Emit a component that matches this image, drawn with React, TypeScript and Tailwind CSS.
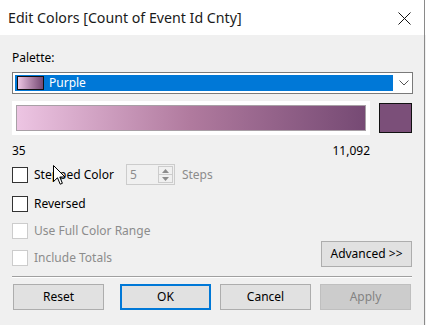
const FONT = { fontFamily: '"Segoe UI", "Noto Sans", "Open Sans", sans-serif' };

function CheckBox({ disabled }: { disabled?: boolean }) {
  return (
    <div
      className={`h-[16px] w-[16px] shrink-0 border bg-white ${disabled ? "border-[#cccccc]" : "border-[#333333]"}`}
    />
  );
}

function Button({ label, primary, disabled }: { label: string; primary?: boolean; disabled?: boolean }) {
  return (
    <div
      className={`flex h-[26px] w-[91px] items-center justify-center text-[12px] ${
        primary
          ? "border-2 border-[#0078d7] bg-[#e1e1e1] text-black"
          : disabled
          ? "border border-[#bfbfbf] bg-[#cccccc] text-[#838383]"
          : "border border-[#adadad] bg-[#e1e1e1] text-black"
      }`}
    >
      {label}
    </div>
  );
}

export default function App() {
  return (
    <div className="relative h-[325px] w-[426px] overflow-hidden bg-[#f0f0f0] text-black" style={FONT}>
      {/* title bar */}
      <div className="flex h-[35px] items-center justify-between bg-white pl-[8px] pr-[15px]">
        <span className="text-[14.2px] text-[#1a1a1a]">Edit Colors [Count of Event Id Cnty]</span>
        <svg width="13" height="13" viewBox="0 0 13 13" className="mt-[1px]">
          <path d="M0.5 0.5 L12.5 12.5 M12.5 0.5 L0.5 12.5" stroke="#111" strokeWidth="1" />
        </svg>
      </div>

      <div className="px-[12px]">
        <div className="mt-[14px] h-[17px] text-[12px] leading-[17px]">Palette:</div>

        {/* dropdown */}
        <div className="mt-[6px] flex h-[22px] w-[401px] items-center border border-[#7a7a7a] bg-white pl-[2px]">
          <div className="flex h-[16px] w-[378px] items-center bg-[#0078d7] pl-[2px]">
            <div className="h-[14px] w-[27px] border border-[#111] bg-gradient-to-r from-[#edc5e3] to-[#764a74]" />
            <span className="ml-[5px] text-[12px] text-white">Purple</span>
          </div>
          <svg width="10" height="6" viewBox="0 0 10 6" className="ml-[6px]">
            <path d="M0.5 0.5 L5 5 L9.5 0.5" fill="none" stroke="#555" strokeWidth="1" />
          </svg>
        </div>

        {/* gradient */}
        <div className="mt-[7px] flex items-start">
          <div className="h-[34px] w-[358px] bg-white p-[4px]">
            <div className="h-full w-full border border-[#a8a0a6] bg-gradient-to-r from-[#edc5e3] via-[#b07a9e] to-[#764a74]" />
          </div>
          <div className="ml-[9px] mt-[2px] h-[30px] w-[33px] border border-[#111] bg-[#7b4f79]" />
        </div>

        <div className="mt-[8px] flex w-[358px] justify-between text-[12px] leading-[16px]">
          <span>35</span>
          <span>11,092</span>
        </div>

        {/* stepped color */}
        <div className="mt-[5px] flex h-[21px] items-center">
          <CheckBox />
          <span className="ml-[6px] text-[12px]">Stepped Color</span>
          <div className="ml-[12px] flex h-[21px] w-[49px] items-center border border-[#cccccc] bg-[#f0f0f0]">
            <span className="ml-[3px] flex-1 text-[12px] text-[#8c8c8c]">5</span>
            <div className="mr-[1px] flex h-[17px] w-[15px] flex-col border border-[#cccccc]">
              <div className="flex flex-1 items-center justify-center border-b border-[#cccccc]">
                <svg width="7" height="4" viewBox="0 0 7 4"><path d="M0 4 L3.5 0 L7 4 Z" fill="#8c8c8c" /></svg>
              </div>
              <div className="flex flex-1 items-center justify-center">
                <svg width="7" height="4" viewBox="0 0 7 4"><path d="M0 0 L3.5 4 L7 0 Z" fill="#8c8c8c" /></svg>
              </div>
            </div>
          </div>
          <span className="ml-[7px] text-[12px] text-[#8c8c8c]">Steps</span>
        </div>

        <div className="mt-[11px] flex h-[16px] items-center">
          <CheckBox />
          <span className="ml-[6px] text-[12px]">Reversed</span>
        </div>

        <div className="mt-[11px] flex items-start justify-between">
          <div className="flex flex-col">
            <div className="flex h-[16px] items-center">
              <CheckBox disabled />
              <span className="ml-[6px] text-[12px] text-[#8c8c8c]">Use Full Color Range</span>
            </div>
            <div className="mt-[11px] flex h-[16px] items-center">
              <CheckBox disabled />
              <span className="ml-[6px] text-[12px] text-[#8c8c8c]">Include Totals</span>
            </div>
          </div>
          <div className="mr-[2px] mt-[18px] flex h-[26px] w-[91px] items-center justify-center border border-[#adadad] bg-[#e1e1e1] text-[12px]">
            Advanced &gt;&gt;
          </div>
        </div>

        <div className="mt-[9px] h-[2px] w-[400px] border-t border-[#a0a0a0] border-b border-b-white" />

        <div className="mt-[6px] flex w-[400px] pl-[1px]">
          <Button label="Reset" />
          <div className="ml-[16px]">
            <Button label="OK" primary />
          </div>
          <div className="ml-[9px]">
            <Button label="Cancel" />
          </div>
          <div className="ml-[9px]">
            <Button label="Apply" disabled />
          </div>
        </div>
      </div>

      {/* window edge */}
      <div className="absolute right-[1px] top-0 h-full w-[1px] bg-[#8a8a8a]" />

      {/* mouse cursor */}
      <svg className="absolute left-[53px] top-[165px]" width="13" height="21" viewBox="0 0 13 21">
        <path
          d="M0.5 0.5 L0.5 16.5 L4.5 12.8 L7.2 19.2 L9.4 18.3 L6.8 12 L12 12 Z"
          fill="#fff"
          stroke="#000"
          strokeWidth="1"
          strokeLinejoin="miter"
        />
      </svg>
    </div>
  );
}
